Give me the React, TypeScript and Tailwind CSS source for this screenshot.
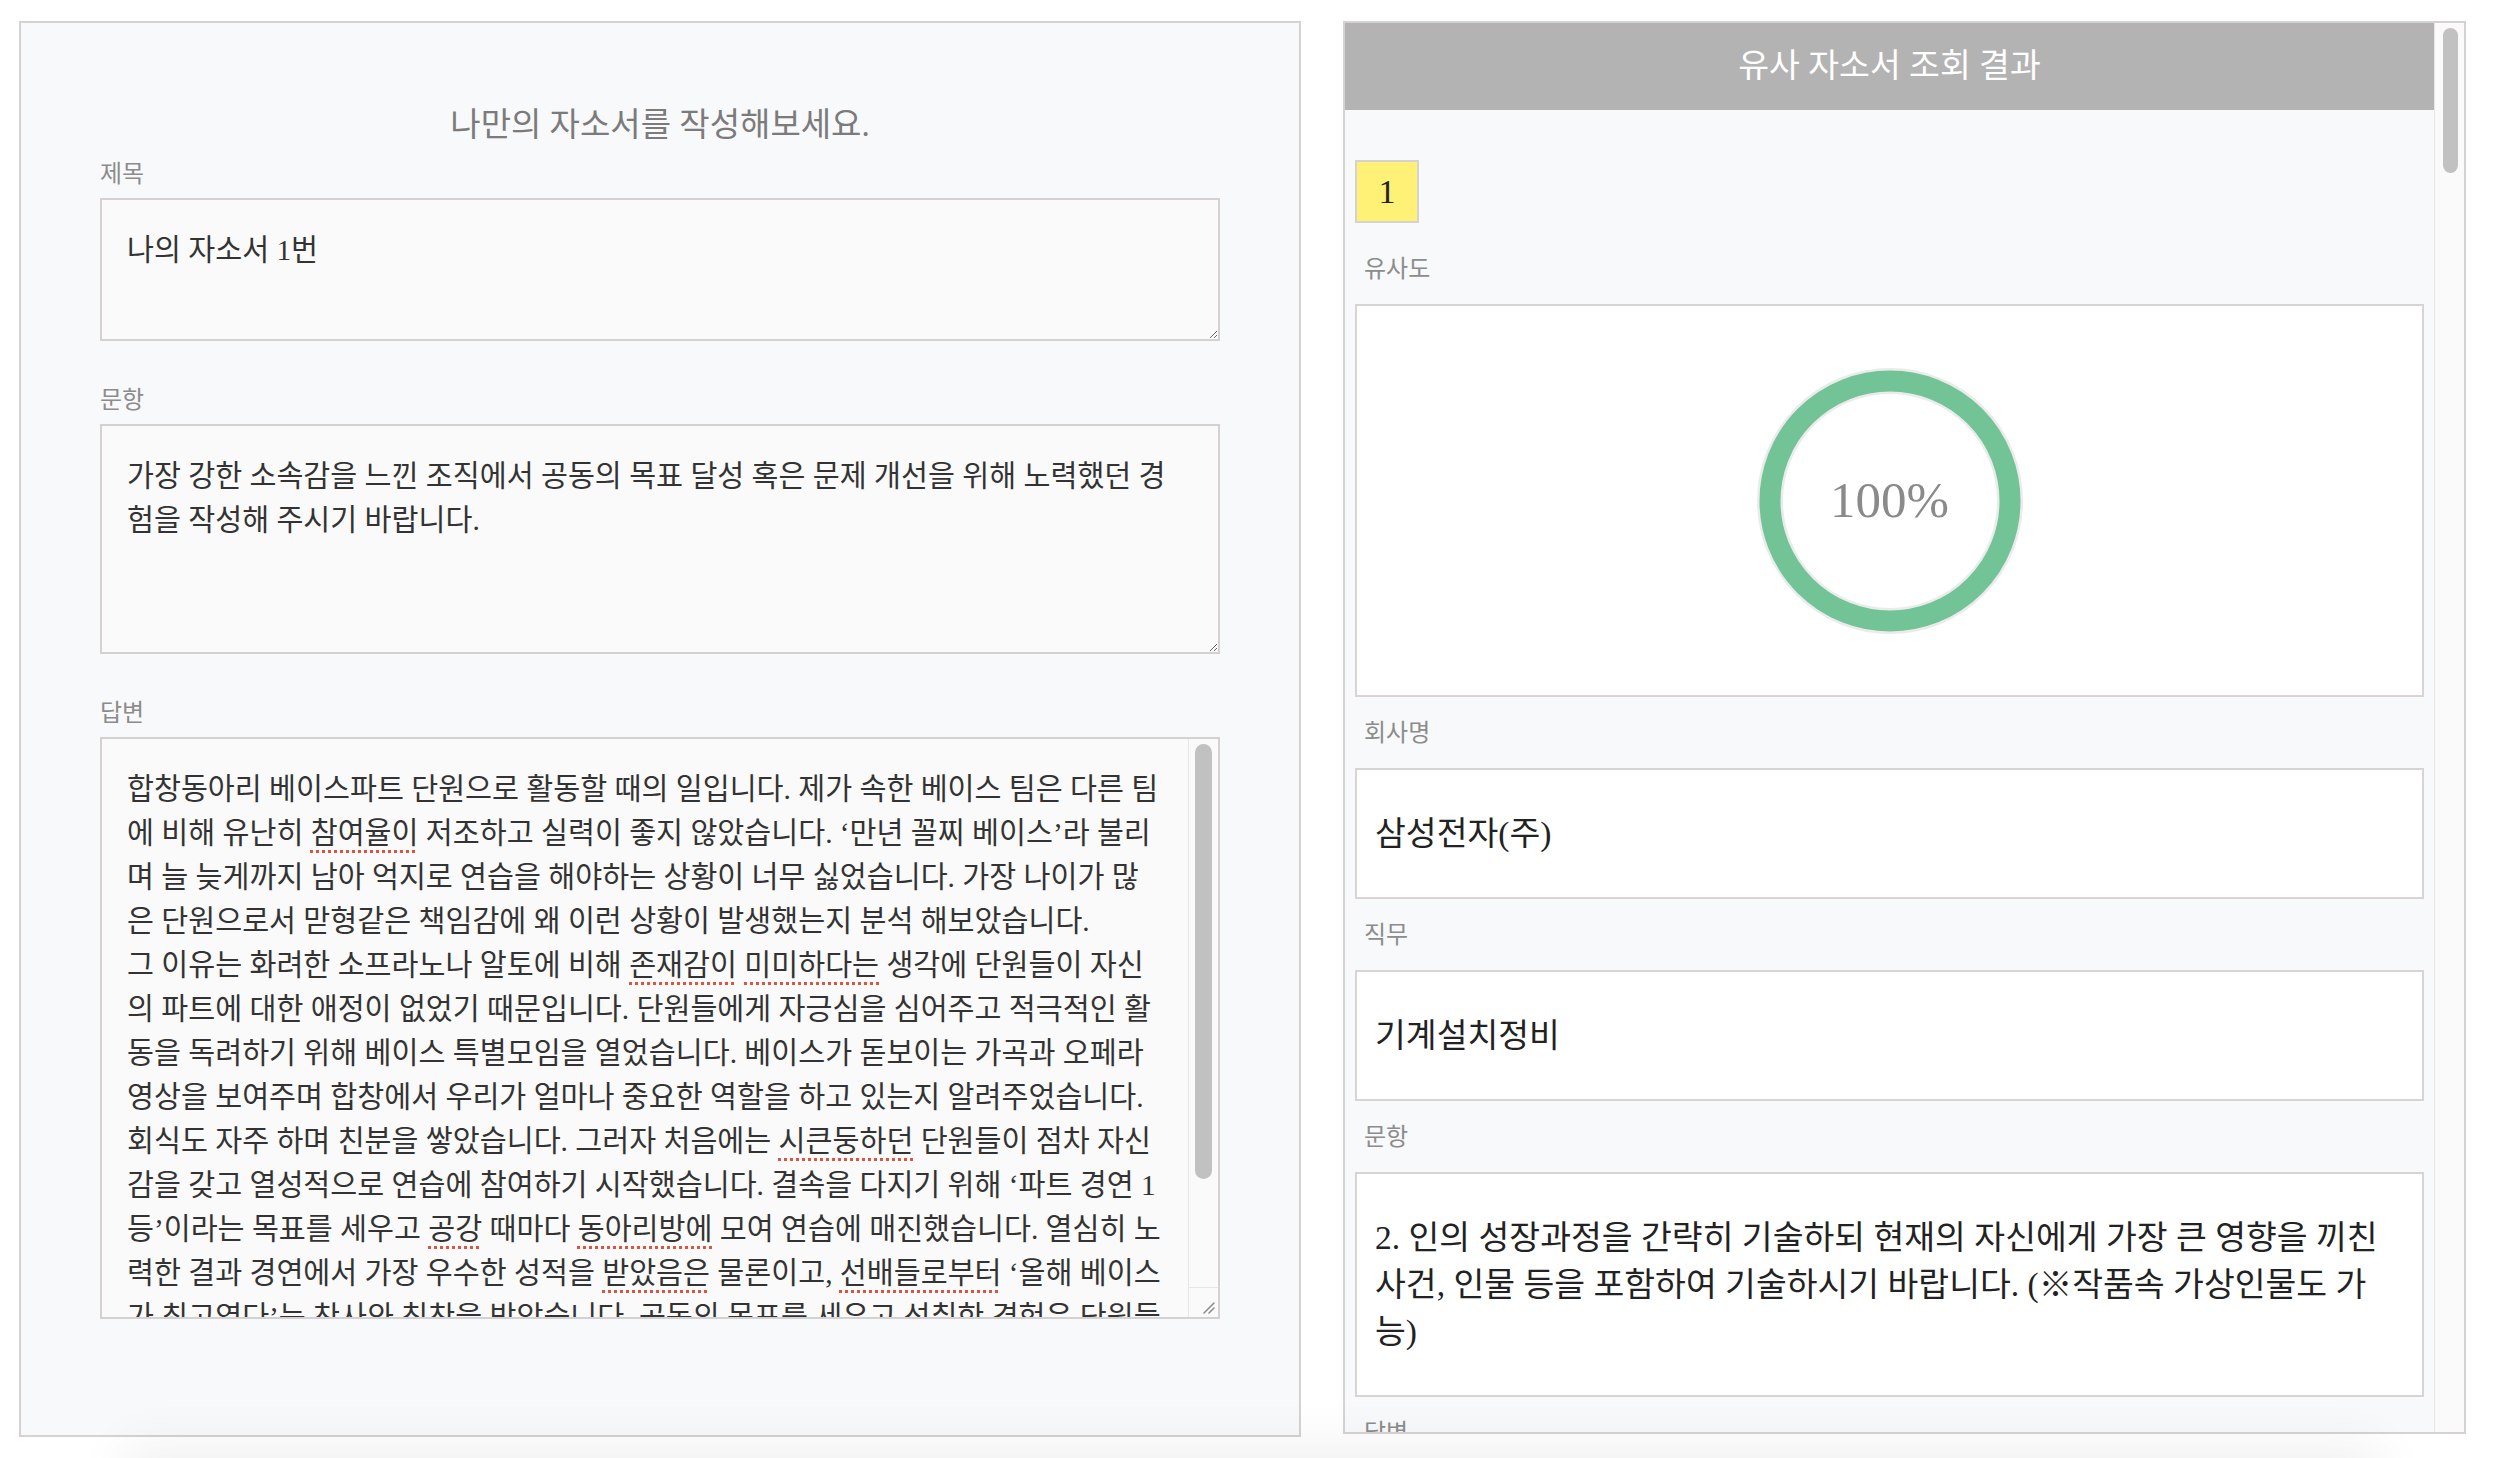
import React from "react";

const font = "font-['Liberation_Serif','Noto_Sans_CJK_KR',serif]";

const answerLines = [
  "합창동아리 베이스파트 단원으로 활동할 때의 일입니다. 제가 속한 베이스 팀은 다른 팀",
  "에 비해 유난히 [참여율이] 저조하고 실력이 좋지 않았습니다. ‘만년 꼴찌 베이스’라 불리",
  "며 늘 늦게까지 남아 억지로 연습을 해야하는 상황이 너무 싫었습니다. 가장 나이가 많",
  "은 단원으로서 맏형같은 책임감에 왜 이런 상황이 발생했는지 분석 해보았습니다.",
  "그 이유는 화려한 소프라노나 알토에 비해 [존재감이] [미미하다는] 생각에 단원들이 자신",
  "의 파트에 대한 애정이 없었기 때문입니다. 단원들에게 자긍심을 심어주고 적극적인 활",
  "동을 독려하기 위해 베이스 특별모임을 열었습니다. 베이스가 돋보이는 가곡과 오페라",
  "영상을 보여주며 합창에서 우리가 얼마나 중요한 역할을 하고 있는지 알려주었습니다.",
  "회식도 자주 하며 친분을 쌓았습니다. 그러자 처음에는 [시큰둥하던] 단원들이 점차 자신",
  "감을 갖고 열성적으로 연습에 참여하기 시작했습니다. 결속을 다지기 위해 ‘파트 경연 1",
  "등’이라는 목표를 세우고 [공강] 때마다 [동아리방에] 모여 연습에 매진했습니다. 열심히 노",
  "력한 결과 경연에서 가장 우수한 성적을 [받았음은] 물론이고, [선배들로부터] ‘올해 베이스",
  "가 최고였다’는 찬사와 칭찬을 받았습니다. 공동의 목표를 세우고 성취한 경험은 단원들",
  "에게 큰 자부심이 되었고, 저 역시 조직을 위해 노력하는 보람을 느낄 수 있었습니다.",
  "이러한 경험을 바탕으로 어떤 조직에서든 구성원과 함께 목표를 이루겠습니다.",
];

const sampleAnswer =
  "저는 어릴 때부터 아버지를 따라 공장에 자주 갔습니다. 크고 복잡한 기계들이 정확하게 맞물려 돌아가는 모습은 어린 저에게 큰 호기심을 불러일으켰습니다. 특히 고장 난 설비를 차분히 점검하고 부품 하나하나를 살펴 다시 가동시키던 아버지의 모습은 지금까지도 생생하게 기억에 남아 있습니다. 그 영향으로 기계공학을 전공하게 되었고, 학부 시절에는 설계 동아리에서 소형 컨베이어 장치를 직접 제작하며 이론과 실무의 차이를 몸으로 익혔습니다. 제작 과정에서 모터 과열과 벨트 이탈 문제가 반복되었지만, 원인을 하나씩 기록하고 분석하는 습관 덕분에 끝까지 완성할 수 있었습니다. 이 경험을 통해 문제의 원인을 끝까지 추적하는 끈기와 꼼꼼함을 길렀습니다. 입사 후에는 설비의 작은 이상 징후도 놓치지 않는 정비 엔지니어로서 생산 현장의 안정적인 가동에 기여하겠습니다.";

const results = [
  {
    score: 100,
    company: "삼성전자(주)",
    job: "기계설치정비",
    question:
      "2. 인의 성장과정을 간략히 기술하되 현재의 자신에게 가장 큰 영향을 끼친\n사건, 인물 등을 포함하여 기술하시기 바랍니다. (※작품속 가상인물도 가\n능)",
  },
  {
    score: 92,
    company: "현대자동차(주)",
    job: "생산기술",
    question: "본인이 속한 조직에서 공동의 목표를 달성하기 위해 노력했던 경험을 기술해 주십시오.",
  },
  {
    score: 87,
    company: "LG전자(주)",
    job: "설비기술",
    question: "팀 활동에서 갈등을 해결하고 성과를 낸 경험을 구체적으로 작성해 주십시오.",
  },
];

function renderLine(line: string) {
  // words in [brackets] get the spellcheck dots
  return line.split(/(\[[^\]]+\])/).map((part, i) =>
    part.startsWith("[") ? (
      <span
        key={i}
        className="underline decoration-dotted decoration-[#e0533f] decoration-[3px] underline-offset-[7px]"
      >
        {part.slice(1, -1)}
      </span>
    ) : (
      <React.Fragment key={i}>{part}</React.Fragment>
    )
  );
}

function Ring({ score }: { score: number }) {
  const c = 2 * Math.PI * 120;
  return (
    <div className="grid place-items-center">
      <svg width="280" height="280" viewBox="0 0 280 280" className="col-start-1 row-start-1">
        <circle cx="140" cy="140" r="120" fill="none" stroke="#ebebeb" strokeWidth="26" />
        <circle
          cx="140"
          cy="140"
          r="120"
          fill="none"
          stroke="#72c497"
          strokeWidth="21"
          strokeDasharray={`${(c * score) / 100} ${c}`}
          transform="rotate(-90 140 140)"
        />
      </svg>
      <span className="col-start-1 row-start-1 text-[51px] leading-[51px] text-[#8a8a8a]">{score}%</span>
    </div>
  );
}

function ResultLabel({ children, first }: { children: React.ReactNode; first?: boolean }) {
  return (
    <div
      className={
        (first ? "mt-[28px]" : "mt-[18px]") +
        " mb-[17px] pl-[9px] text-[24px] leading-[36px] text-[#8c8c8c]"
      }
    >
      {children}
    </div>
  );
}

function ResultBox({ children }: { children: React.ReactNode }) {
  return (
    <div className="border-2 border-[#d8d4d4] bg-white px-[18px] py-[40px] text-[33.5px] leading-[47px] text-[#222] whitespace-pre-line">
      {children}
    </div>
  );
}

// mac style scrollbar track + thumb
function ScrollTrack({ thumbTop, thumbHeight, inset }: { thumbTop: string; thumbHeight: string; inset: string }) {
  return (
    <div className={`flex-1 border-l border-[#e6e6e6] bg-[#fafafa] ${inset} ${thumbTop}`}>
      <div className={`${thumbHeight} rounded-full bg-[#c1c1c1]`} />
    </div>
  );
}

export default function App() {
  return (
    <div className={`${font} relative min-h-screen overflow-hidden bg-white`}>
      <div className="flex items-start gap-[42px] pl-[19px] pt-[21px]">
        {/* 작성 영역 */}
        <section className="h-[1416px] w-[1282px] shrink-0 border-2 border-[#d6d2d2] bg-[#f8f9fa] px-[79px] pt-[80px]">
          <h1 className="text-center text-[33px] leading-[44px] text-[#7b7b7b]">나만의 자소서를 작성해보세요.</h1>

          <div className="mt-[9px] mb-[6px] text-[24px] leading-[36px] text-[#8c8c8c]">제목</div>
          <textarea
            defaultValue="나의 자소서 1번"
            spellCheck={false}
            className="block h-[143px] w-full border-2 border-[#d5d1d1] bg-[#fafafa] pl-[25px] pr-[20px] pt-[28px] text-[29.3px] leading-[44px] text-[#333] outline-none"
          />

          <div className="mt-[41px] mb-[6px] text-[24px] leading-[36px] text-[#8c8c8c]">문항</div>
          <textarea
            defaultValue={"가장 강한 소속감을 느낀 조직에서 공동의 목표 달성 혹은 문제 개선을 위해 노력했던 경\n험을 작성해 주시기 바랍니다."}
            spellCheck={false}
            className="block h-[230px] w-full border-2 border-[#d5d1d1] bg-[#fafafa] pl-[25px] pr-[16px] pt-[28px] text-[29.3px] leading-[44px] text-[#333] outline-none"
          />

          <div className="mt-[41px] mb-[6px] text-[24px] leading-[36px] text-[#8c8c8c]">답변</div>
          <div className="flex h-[582px] w-full border-2 border-[#d5d1d1] bg-[#fafafa]">
            <div className="min-w-0 flex-1 overflow-y-auto whitespace-pre-wrap pb-[25px] pt-[28px] pl-[25px] pr-[4px] text-[29.3px] leading-[44px] text-[#333] [scrollbar-width:none]">
              {answerLines.map((line, i) => (
                <React.Fragment key={i}>
                  {renderLine(line)}
                  {i < answerLines.length - 1 ? "\n" : ""}
                </React.Fragment>
              ))}
            </div>
            <div className="flex w-[30px] shrink-0 flex-col">
              <ScrollTrack thumbTop="pt-[5px]" thumbHeight="h-[435px]" inset="px-[6px]" />
              <div className="flex h-[30px] items-end justify-end border-l border-t border-[#e6e6e6] bg-[#fafafa] p-[3px]">
                <svg width="14" height="14" viewBox="0 0 14 14">
                  <path d="M13 3 L3 13 M13 8 L8 13" stroke="#8a8a8a" strokeWidth="1.5" strokeLinecap="round" />
                </svg>
              </div>
            </div>
          </div>
        </section>

        {/* 조회 결과 */}
        <section className="flex h-[1413px] w-[1123px] shrink-0 border-2 border-[#d6d2d2] bg-[#f8f9fa]">
          <div className="min-w-0 flex-1 overflow-y-auto [scrollbar-width:none]">
            <div className="flex h-[87px] items-center justify-center bg-[#b3b3b3] text-[33.5px] text-white">
              유사 자소서 조회 결과
            </div>
            <div className="px-[10px] pb-[40px]">
              {results.map((r, i) => (
                <div key={i} className="pt-[50px]">
                  <div className="flex h-[63px] w-[64px] items-center justify-center border-2 border-[#d6d2d2] bg-[#fff176] text-[34px] text-[#222]">
                    {i + 1}
                  </div>
                  <ResultLabel first>유사도</ResultLabel>
                  <div className="flex h-[393px] items-center justify-center border-2 border-[#d8d4d4] bg-white">
                    <Ring score={r.score} />
                  </div>
                  <ResultLabel>회사명</ResultLabel>
                  <ResultBox>{r.company}</ResultBox>
                  <ResultLabel>직무</ResultLabel>
                  <ResultBox>{r.job}</ResultBox>
                  <ResultLabel>문항</ResultLabel>
                  <ResultBox>{r.question}</ResultBox>
                  <ResultLabel>답변</ResultLabel>
                  <ResultBox>{sampleAnswer}</ResultBox>
                </div>
              ))}
            </div>
          </div>
          <div className="flex w-[30px] shrink-0 flex-col">
            <ScrollTrack thumbTop="pt-[5px]" thumbHeight="h-[145px]" inset="pl-[8px] pr-[6px]" />
          </div>
        </section>
      </div>

      {/* soft shadow rising from below the fold */}
      <div className="fixed left-[150px] right-[150px] top-[1470px] h-[200px] bg-[#f2f2f2] shadow-[0_0_50px_25px_rgba(0,0,0,0.06)]" />
    </div>
  );
}
